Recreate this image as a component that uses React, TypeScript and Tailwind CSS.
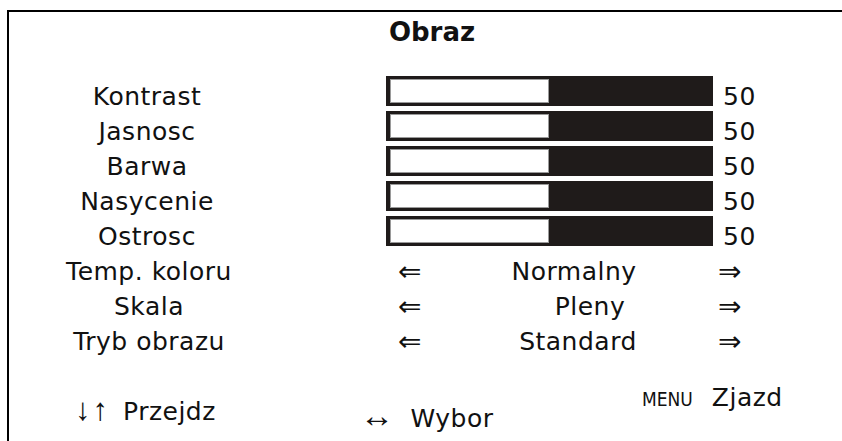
const sliders = ['Kontrast', 'Jasnosc', 'Barwa', 'Nasycenie', 'Ostrosc'];

const options = [
  { label: 'Temp. koloru', value: 'Normalny', shift: 'pr-[4px]' },
  { label: 'Skala', value: 'Pleny', shift: 'pl-[28px]' },
  { label: 'Tryb obrazu', value: 'Standard', shift: 'pl-[4px]' },
];

const SliderRow = ({ label, value }: { label: string; value: number }) => (
  <div className="flex h-[35px] items-start">
    <div className="w-[276px] text-center leading-[41px]">{label}</div>
    <div className="ml-[101px] flex h-[30px] w-[327px] bg-[#1f1b1a] py-[3px] pl-[4px]">
      <div className="h-full w-[159px] border border-[#9a9a9a] bg-white" />
    </div>
    <div className="ml-[10px] leading-[41px]">{value}</div>
  </div>
);

const OptionRow = ({ label, value, shift }: { label: string; value: string; shift: string }) => (
  <div className="flex h-[35px] items-start leading-[41px]">
    <div className="w-[276px] pl-[4px] text-center">{label}</div>
    <div className="ml-[101px] w-[48px] text-center text-[28px]">⇐</div>
    <div className={`w-[284px] text-center ${shift}`}>{value}</div>
    <div className="w-[22px] text-center text-[28px]">⇒</div>
  </div>
);

export default function App() {
  return (
    <div className="h-[441px] w-[842px] overflow-hidden bg-white pl-[7px] pt-[10px] font-['DejaVu_Sans',Verdana,sans-serif] text-[25px] tracking-[0.5px] text-[#111]">
      <div className="flex h-full flex-col border-l-2 border-t-2 border-black">
        <div className="mb-[29px] box-content h-[30px] pt-[5px] text-center text-[26px] font-bold leading-[30px] tracking-normal">
          <span className="pl-[13px]">Obraz</span>
        </div>

        {sliders.map((s) => (
          <SliderRow key={s} label={s} value={50} />
        ))}
        {options.map((o) => (
          <OptionRow key={o.label} {...o} />
        ))}

        {/* footer hints */}
        <div className="flex items-start leading-[30px]">
          <div className="ml-[66px] mt-[39px] flex w-[290px] items-baseline">
            <span className="font-['Liberation_Sans',sans-serif] text-[31px] leading-[30px] tracking-[2px]">↓↑</span>
            <span className="ml-[13px]">Przejdz</span>
          </div>
          <div className="mt-[44px] flex w-[277px] items-baseline">
            <span className="-ml-[5px] font-['Liberation_Sans',sans-serif] text-[34px] leading-[30px]">↔</span>
            <span className="ml-[16px]">Wybor</span>
          </div>
          <div className="mt-[27px] flex items-baseline">
            <span className="font-['DejaVu_Sans_Condensed',sans-serif] text-[19px] tracking-normal">MENU</span>
            <span className="ml-[19px]">Zjazd</span>
          </div>
        </div>
      </div>
    </div>
  );
}
